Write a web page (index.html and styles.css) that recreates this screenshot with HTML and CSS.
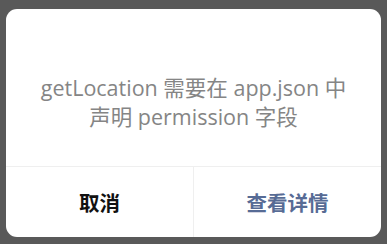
FILE: index.html
```html
<!DOCTYPE html>
<html lang="zh-CN">
<head>
<meta charset="utf-8">
<link rel="stylesheet" href="styles.css">
</head>
<body>
<div class="dialog">
  <div class="dialog-bd">getLocation 需要在 app.json 中<br>声明 permission 字段</div>
  <div class="dialog-ft">
    <div class="btn btn-default">取消</div>
    <div class="btn btn-primary">查看详情</div>
  </div>
</div>
</body>
</html>
```
FILE: styles.css
```css
html, body {
  margin: 0;
  padding: 0;
  background: #595959;
}
body {
  padding: 9px 6px 7px 6px;
  font-family: "Open Sans", "Noto Sans CJK SC", sans-serif;
}
.dialog {
  width: 375px;
  height: 228px;
  background: #fff;
  border-radius: 11px;
  display: flex;
  flex-direction: column;
  overflow: hidden;
}
.dialog-bd {
  flex: 1;
  padding: 64px 10px 0;
  text-align: center;
  color: #858585;
  font-size: 21.5px;
  line-height: 29px;
}
.dialog-ft {
  height: 70px;
  border-top: 1px solid #efefef;
  display: flex;
}
.btn {
  flex: 1;
  display: flex;
  align-items: center;
  justify-content: center;
  font-family: "Noto Sans CJK SC", sans-serif;
  font-size: 20.5px;
  font-weight: 700;
}
.btn-default {
  color: #111;
  border-right: 1px solid #efefef;
}
.btn-primary {
  color: #576b95;
}
```
